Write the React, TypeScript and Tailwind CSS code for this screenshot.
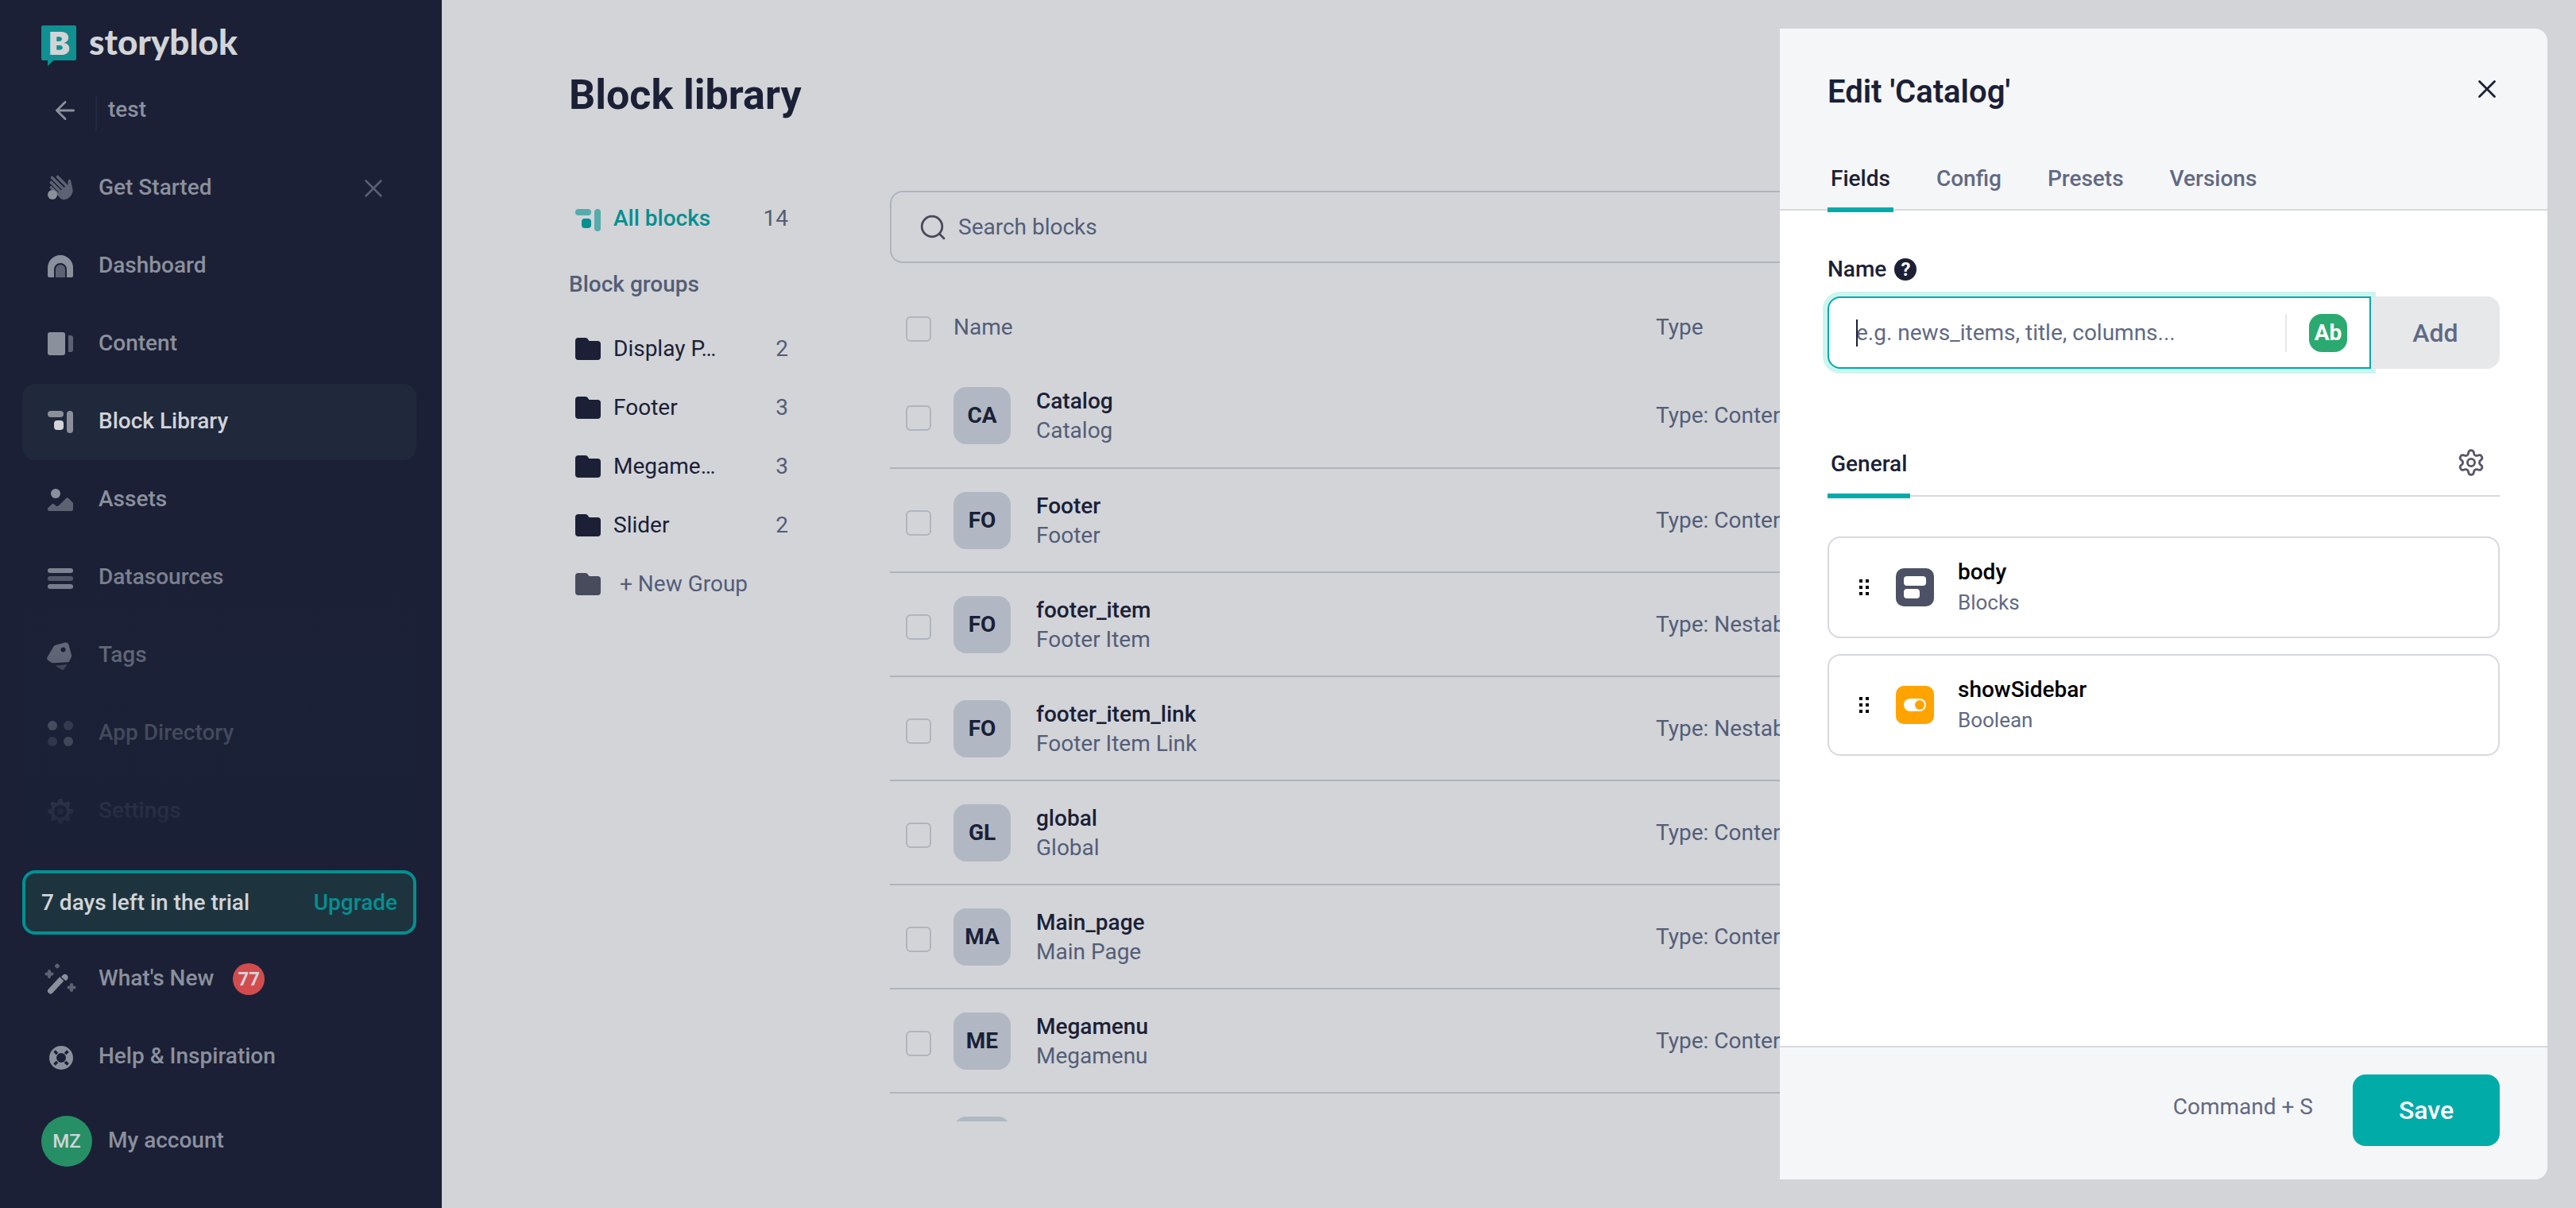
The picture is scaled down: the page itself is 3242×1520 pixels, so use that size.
import type { ReactNode } from "react";

function gearPath(teeth: number, radius: number, depth: number, cx: number, cy: number) {
  const points: string[] = [];
  const steps = teeth * 24;
  for (let i = 0; i < steps; i++) {
    const angle = (i / steps) * Math.PI * 2;
    const wave = Math.tanh(1.6 * Math.cos(teeth * angle)) / Math.tanh(1.6);
    const r = radius + depth * wave;
    points.push(`${(cx + r * Math.sin(angle)).toFixed(2)} ${(cy - r * Math.cos(angle)).toFixed(2)}`);
  }
  return `M${points.join("L")}Z`;
}

function Icon({ children }: { children: ReactNode }) {
  return (
    <svg viewBox="0 0 40 40" className="size-10 shrink-0" fill="currentColor" aria-hidden="true">
      {children}
    </svg>
  );
}

const faint = 0.6;

const HandIcon = () => (
  <Icon>
    <g opacity={faint}>
      <path
        d="M9.500 6.500L24 21M16.500 5.500L29 18M8.300 12.500L21 25M8.300 19L18 28"
        stroke="currentColor"
        strokeLinecap="round"
        strokeWidth="3.600"
        fill="none"
      />
      <path d="M17 26L27.500 16.500L29.500 17.800C30 14.500 28.800 10 30.800 9C32.800 8.300 33.200 10.500 33.500 12.500L35.600 22C36.200 26 33 30.500 29 33C25.500 35 21.500 34.500 18.500 31Z" />
    </g>
    <circle cx="10" cy="28" r="6" />
  </Icon>
);

const DashboardIcon = () => (
  <Icon>
    <path d="M4 32V22a16 16 0 0 1 32 0v10a2 2 0 0 1-2 2h-6V24a8 8 0 0 0-16 0v10H6a2 2 0 0 1-2-2Z" />
    <path opacity={faint} d="M14 34V24a6 6 0 0 1 12 0v10Z" />
  </Icon>
);

const ContentIcon = () => (
  <Icon>
    <rect x="4" y="5" width="22" height="29" rx="3" />
    <path opacity={faint} d="M30 9h3a3 3 0 0 1 3 3v15a3 3 0 0 1-3 3h-3Z" />
  </Icon>
);

const BlocksIcon = () => (
  <Icon>
    <rect opacity={faint} x="4" y="6" width="20" height="8" rx="4" />
    <rect opacity={faint} x="28" y="6" width="8" height="28" rx="4" />
    <rect x="12" y="18" width="12" height="12" rx="4" />
  </Icon>
);

const AssetsIcon = () => (
  <Icon>
    <circle cx="14" cy="12" r="6" />
    <path
      opacity={faint}
      d="M4 30.500L9 25.500a2.500 2.500 0 0 1 3.200 0l1.800 1.500a3 3 0 0 0 4 0l9-8.800a2.500 2.500 0 0 1 3.600 0L36 24v8a2 2 0 0 1-2 2H6a2 2 0 0 1-2-2Z"
    />
  </Icon>
);

const DatasourcesIcon = () => (
  <Icon>
    <rect x="4" y="8" width="32" height="6" rx="3" />
    <rect opacity={faint} x="4" y="18" width="32" height="6" rx="3" />
    <rect x="4" y="28" width="32" height="6" rx="3" />
  </Icon>
);

const TagsIcon = () => (
  <Icon>
    <path
      fillRule="evenodd"
      d="M14.500 6.500L26 3.600a4 4 0 0 1 4.500 2.800L34 19a5 5 0 0 1-.5 3.500L31 27.200a2 2 0 0 1-1.600 1L11 29.200a5 5 0 0 1-3.500-1.200L4.600 26a3.500 3.500 0 0 1-.8-4.500L11.500 8.600a5 5 0 0 1 3-2.100ZM23.500 9.600a3 3 0 1 0 0 6a3 3 0 0 0 0-6Z"
    />
    <path opacity={faint} d="M13.500 32.400L28.500 31.300L24.500 37a2.500 2.500 0 0 1-3.300.6Z" />
  </Icon>
);

const AppsIcon = () => (
  <Icon>
    <circle cx="10" cy="10" r="6" />
    <circle opacity={faint} cx="30" cy="10" r="6" />
    <circle opacity={faint} cx="10" cy="30" r="6" />
    <circle cx="30" cy="30" r="6" />
  </Icon>
);

const SettingsIcon = () => (
  <Icon>
    <path
      fillRule="evenodd"
      d={`${gearPath(8, 14, 2, 20, 20)}M20 12a8 8 0 1 0 0 16a8 8 0 0 0 0-16Z`}
    />
    <circle opacity={faint} cx="20" cy="20" r="4" />
  </Icon>
);

const WandIcon = () => (
  <Icon>
    <g stroke="currentColor" strokeLinecap="round" fill="none">
      <path d="M7.500 35L21 20.500" strokeWidth="7" />
      <g opacity={faint} strokeWidth="4">
        <path d="M6 10v7M2.500 13.500h7M34 27v7M30.500 30.500h7" />
        <path d="M16 2.500v2M15 3.500h2" />
      </g>
    </g>
    <path d="M23.500 14.500a4 4 0 0 1 5.500 5.500l-2.300 2.200-5.400-5.400Z" />
    <path d="M19 16L27 24" stroke="#1b2036" strokeWidth="1.500" />
  </Icon>
);

const HelpIcon = () => (
  <Icon>
    <circle cx="21" cy="21" r="10.500" fill="none" stroke="currentColor" strokeWidth="9" />
    <path
      d="M12.500 12.500l3.500 3.500M29.500 12.500l-3.500 3.500M12.500 29.500l3.500-3.500M29.500 29.500l-3.500-3.500"
      stroke="#1b2036"
      strokeWidth="3.600"
    />
  </Icon>
);

const FolderIcon = ({ className }: { className: string }) => (
  <svg viewBox="0 0 32 28" className={`h-7 w-8 shrink-0 ${className}`} fill="currentColor" aria-hidden="true">
    <path d="M4 0h8.500a4 4 0 0 1 3 1.300L17.500 4H28a4 4 0 0 1 4 4v16a4 4 0 0 1-4 4H4a4 4 0 0 1-4-4V4a4 4 0 0 1 4-4Z" />
  </svg>
);

const CloseIcon = ({ width }: { width: number }) => (
  <svg viewBox="0 0 24 24" className="size-6" fill="none" stroke="currentColor" strokeWidth={width} strokeLinecap="round" aria-hidden="true">
    <path d="M2.500 2.500L21.500 21.500M21.500 2.500L2.500 21.500" />
  </svg>
);

const navItems = [
  { label: "Get Started", icon: <HandIcon />, closable: true },
  { label: "Dashboard", icon: <DashboardIcon /> },
  { label: "Content", icon: <ContentIcon /> },
  { label: "Block Library", icon: <BlocksIcon />, active: true },
  { label: "Assets", icon: <AssetsIcon /> },
  { label: "Datasources", icon: <DatasourcesIcon /> },
  { label: "Tags", icon: <TagsIcon /> },
  { label: "App Directory", icon: <AppsIcon /> },
  { label: "Settings", icon: <SettingsIcon /> },
];

function Sidebar() {
  return (
    <aside className="flex h-full w-[556px] shrink-0 flex-col bg-[#1b2036] pt-8 pr-8 pb-[52px] pl-7 font-medium text-[#8b909d]">
      <a href="#" className="flex items-start gap-4 self-start pl-6" aria-label="storyblok">
        <svg viewBox="0 0 44 51" className="h-[51px] w-11 overflow-visible" aria-hidden="true">
          <path fill="#109091" d="M2 0h40a2 2 0 0 1 2 2v40a2 2 0 0 1-2 2H15.500L8 51V44H2a2 2 0 0 1-2-2V2a2 2 0 0 1 2-2Z" />
          <text x="22.500" y="36.500" textAnchor="middle" fontFamily="Inter" fontWeight="900" fontSize="40" fill="#d2d4d8">B</text>
        </svg>
        <span className="font-['Lato',sans-serif] text-[44px] leading-10 font-black text-[#d2d4d8]">storyblok</span>
      </a>
      <a href="#" className="mt-[37px] flex h-11 shrink-0 items-center pl-[42px]">
        <svg viewBox="0 0 24 24" className="mb-1.5 size-6" fill="none" stroke="currentColor" strokeWidth="2.800" strokeLinecap="round" strokeLinejoin="round" aria-hidden="true">
          <path d="M12 1.400L1.400 12L12 22.600M1.400 12H22.600" />
        </svg>
        <span className="ml-[26px] h-11 w-0.5 bg-[#202a3f]" />
        <span className="ml-3.5 pb-2">test</span>
      </a>
      <nav className="relative mt-[25px] min-h-0 overflow-hidden">
        <ul className="flex flex-col gap-0.5">
          {navItems.map((item) => (
            <li
              key={item.label}
              className={`flex h-24 shrink-0 items-center rounded-2xl pr-[42px] pl-7 ${item.active ? "bg-[#20283c] text-[#d2d4d8]" : ""}`}
            >
              <a href="#" className="flex flex-1 items-center gap-7">
                {item.icon}
                <span className="pb-0.5">{item.label}</span>
              </a>
              {item.closable && (
                <button type="button" aria-label="Dismiss" className="text-[#596075]">
                  <CloseIcon width={2.5} />
                </button>
              )}
            </li>
          ))}
        </ul>
        <div className="pointer-events-none absolute inset-x-0 bottom-0 h-[400px] bg-linear-to-b from-[#1a2136]/0 to-[#1a2136]" />
      </nav>
      <div className="mt-auto flex shrink-0 flex-col pt-4">
        <div className="flex h-[81px] items-center justify-between rounded-2xl border-4 border-[#048f90] bg-[#1d343f] px-5 text-[#d2d4d8]">
          <span>7 days left in the trial</span>
          <a href="#" className="text-[#048f90]">Upgrade</a>
        </div>
        <a href="#" className="mt-2 flex h-24 items-center gap-7 pl-7">
          <WandIcon />
          <span className="pb-0.5">What's New</span>
          <span className="-ml-1 flex size-10 items-center justify-center rounded-full bg-[#d24c4d] text-2xl font-bold text-[#d2d4d8]">
            77
          </span>
        </a>
        <a href="#" className="mt-0.5 flex h-24 items-center gap-7 pl-7">
          <HelpIcon />
          <span className="pb-0.5">Help &amp; Inspiration</span>
        </a>
        <a href="#" className="mt-[26px] flex items-center gap-5 pl-6">
          <span className="flex size-16 items-center justify-center rounded-full bg-[#268f66] text-2xl text-[#d2d4d8]">MZ</span>
          <span className="pb-0.5">My account</span>
        </a>
      </div>
    </aside>
  );
}

const groups = [
  { name: "Display P…", count: 2 },
  { name: "Footer", count: 3 },
  { name: "Megame…", count: 3 },
  { name: "Slider", count: 2 },
];

const blocks = [
  { initials: "CA", name: "Catalog", title: "Catalog", type: "Content Type" },
  { initials: "FO", name: "Footer", title: "Footer", type: "Content Type" },
  { initials: "FO", name: "footer_item", title: "Footer Item", type: "Nestable" },
  { initials: "FO", name: "footer_item_link", title: "Footer Item Link", type: "Nestable" },
  { initials: "GL", name: "global", title: "Global", type: "Content Type" },
  { initials: "MA", name: "Main_page", title: "Main Page", type: "Content Type" },
  { initials: "ME", name: "Megamenu", title: "Megamenu", type: "Content Type" },
  { initials: "ME", name: "megamenu_item", title: "Megamenu Item", type: "Nestable" },
];

const Checkbox = ({ label }: { label: string }) => (
  <input
    type="checkbox"
    aria-label={label}
    className="mt-1.5 block size-8 appearance-none rounded-md border-2 border-[#b0b4bd] bg-transparent"
  />
);

function Library() {
  return (
    <main className="flex h-full min-w-0 flex-1 flex-col px-40 pt-[88px] pb-[109px] text-[#545d77]">
      <h1 className="text-[52px] leading-[64px] font-bold text-[#1b2036]">Block library</h1>
      <div className="mt-[88px] flex min-h-0 flex-1 gap-32">
        <nav className="w-[276px] shrink-0">
          <a href="#" className="flex h-[74px] items-center text-[#048f90]">
            <span className="ml-1"><BlocksIcon /></span>
            <span className="ml-3 flex-1 pb-1 font-medium">All blocks</span>
            <span className="pb-1 text-[#545d77]">14</span>
          </a>
          <h2 className="flex h-[88px] items-center font-medium">Block groups</h2>
          {groups.map((group) => (
            <a href="#" key={group.name} className="flex h-[74px] items-center pl-2">
              <FolderIcon className="text-[#1b2036]" />
              <span className="ml-4 text-[#1b2036]">{group.name}</span>
              <span className="ml-auto">{group.count}</span>
            </a>
          ))}
          <button type="button" className="flex h-[74px] items-center gap-6 pl-2">
            <FolderIcon className="text-[#474b5b]" />
            <span>+ New Group</span>
          </button>
        </nav>
        <section className="flex min-w-0 flex-1 flex-col">
          <label className="flex h-[91px] shrink-0 items-center gap-4 rounded-2xl border-2 border-[#aeb4be] pr-8 pl-9">
            <svg viewBox="0 0 32 32" className="size-8 shrink-0" fill="none" stroke="#474b5b" strokeWidth="2.800" strokeLinecap="round" aria-hidden="true">
              <circle cx="15" cy="15" r="12.800" />
              <path d="M24.500 24.500L30 30" />
            </svg>
            <input
              type="text"
              aria-label="Search blocks"
              placeholder="Search blocks"
              className="w-full bg-transparent outline-none placeholder:text-[#545d77]"
            />
          </label>
          <div className="min-h-0 flex-1 overflow-hidden pt-8">
            <table className="w-full table-fixed border-collapse text-left">
              <colgroup>
                <col className="w-20" />
                <col className="w-[884px]" />
                <col />
              </colgroup>
              <thead>
                <tr className="h-[95px]">
                  <th className="pl-5"><Checkbox label="Select all blocks" /></th>
                  <th className="pt-0.5 font-normal">Name</th>
                  <th className="pt-0.5 font-normal">Type</th>
                </tr>
              </thead>
              <tbody>
                {blocks.map((block) => (
                  <tr key={block.name} className="h-[131px] border-b-2 border-[#aeb4be]">
                    <td className="pl-5"><Checkbox label={`Select ${block.name}`} /></td>
                    <td>
                      <div className="flex items-center gap-8">
                        <span className="flex size-[72px] items-center justify-center rounded-2xl bg-[#b1b8c3] font-bold text-[#1b2036]">
                          {block.initials}
                        </span>
                        <div className="leading-[37px]">
                          <div className="font-medium text-[#1b2036]">{block.name}</div>
                          <div>{block.title}</div>
                        </div>
                      </div>
                    </td>
                    <td>Type: {block.type}</td>
                  </tr>
                ))}
              </tbody>
            </table>
          </div>
        </section>
      </div>
    </main>
  );
}

const tabs = ["Fields", "Config", "Presets", "Versions"];

const fields = [
  {
    name: "body",
    type: "Blocks",
    icon: (
      <svg viewBox="0 0 48 48" className="size-12" aria-hidden="true">
        <rect width="48" height="48" rx="10" fill="#4c5165" />
        <rect x="10" y="10" width="28" height="12" rx="4" fill="#fff" />
        <rect x="10" y="26" width="20" height="12" rx="4" fill="#fff" />
      </svg>
    ),
  },
  {
    name: "showSidebar",
    type: "Boolean",
    icon: (
      <svg viewBox="0 0 48 48" className="size-12" aria-hidden="true">
        <rect width="48" height="48" rx="10" fill="#ffa300" />
        <rect x="10" y="16" width="28" height="16" rx="8" fill="#fff" />
        <circle cx="30" cy="24" r="6" fill="#ffa300" />
      </svg>
    ),
  },
];

function Drawer() {
  return (
    <div
      role="dialog"
      aria-label="Edit 'Catalog'"
      className="absolute inset-y-9 right-9 flex w-[966px] flex-col overflow-hidden rounded-r-2xl bg-white text-[#616984]"
    >
      <header className="border-b-2 border-[#d7d9e0] bg-[#f5f6f8] px-[60px] pt-14">
        <div className="flex items-start justify-between">
          <h2 className="text-[40px] leading-[48px] font-semibold text-[#1b2036]">Edit 'Catalog'</h2>
          <button type="button" aria-label="Close" className="mr-1 flex h-10 items-center text-[#1b2036]">
            <CloseIcon width={2.8} />
          </button>
        </div>
        <div role="tablist" className="mt-12 -mb-1 flex gap-[50px]">
          {tabs.map((tab) => (
            <button
              key={tab}
              type="button"
              role="tab"
              aria-selected={tab === "Fields"}
              className={`h-[79px] border-b-6 px-1 font-medium ${tab === "Fields" ? "border-[#00aba8] text-[#1b2036]" : "border-transparent"}`}
            >
              {tab}
            </button>
          ))}
        </div>
      </header>
      <div className="min-h-0 flex-1 px-[60px] pt-[54px]">
        <div className="flex h-10 items-center gap-2.5 text-[#1b2036]">
          <label htmlFor="field-name" className="font-medium">Name</label>
          <span className="flex size-7 items-center justify-center rounded-full bg-[#1b2036] text-2xl font-bold text-white">?</span>
        </div>
        <div className="mt-3.5 flex h-[91px]">
          <div className="relative flex flex-1 items-center rounded-l-2xl border-2 border-[#00aba8] bg-white pr-7 pl-[34px] ring-6 ring-[#ccf5ef]">
            <input
              id="field-name"
              type="text"
              placeholder="e.g. news_items, title, columns..."
              className="w-full bg-transparent outline-none placeholder:text-[#616984]"
            />
            <span className="absolute left-[34px] h-[34px] w-0.5 bg-[#1b2036]" />
            <span className="h-12 w-0.5 shrink-0 bg-[#e7e8eb]" />
            <button
              type="button"
              aria-label="Field type: text"
              className="ml-7 size-12 shrink-0 rounded-2xl bg-[#2aaa70] font-bold text-white"
            >
              Ab
            </button>
          </div>
          <button type="button" className="relative w-[162px] rounded-r-2xl bg-[#e7e8ea] text-[32px] font-medium">
            Add
          </button>
        </div>
        <div className="mt-[83px] flex items-start justify-between border-b-2 border-[#d7d9e0]">
          <button type="button" className="-mb-1 h-20 border-b-6 border-[#00aba8] px-1 font-medium text-[#1b2036]">
            General
          </button>
          <button type="button" aria-label="Tab settings" className="mt-4 mr-4 text-[#555767]">
            <svg viewBox="0 0 40 40" className="size-10" fill="none" stroke="currentColor" strokeWidth="2.800" aria-hidden="true">
              <path d={gearPath(6, 12.9, 2.4, 20, 19)} />
              <circle cx="20" cy="19" r="4.600" />
            </svg>
          </button>
        </div>
        <ul className="mt-[50px] flex flex-col gap-5">
          {fields.map((field) => (
            <li key={field.name} className="flex h-32 items-center rounded-2xl border-2 border-[#d7d9e0] pl-[38px]">
              <svg viewBox="0 0 12 20" className="h-5 w-3 text-black" fill="currentColor" aria-hidden="true">
                <path d="M0 0h4v4H0zM8 0h4v4H8zM0 8h4v4H0zM8 8h4v4H8zM0 16h4v4H0zM8 16h4v4H8z" />
              </svg>
              <span className="ml-[34px]">{field.icon}</span>
              <div className="ml-[30px] leading-[38px]">
                <div className="font-medium text-black">{field.name}</div>
                <div className="text-[26px]">{field.type}</div>
              </div>
            </li>
          ))}
        </ul>
      </div>
      <footer className="flex items-center justify-end border-t-2 border-[#d7d9e0] bg-[#f5f6f8] px-[60px] pt-[34px] pb-[42px]">
        <span className="pb-2">Command + S</span>
        <button type="button" className="ml-[50px] h-[90px] w-[185px] rounded-2xl bg-[#00aba8] text-[32px] font-medium text-white">
          Save
        </button>
      </footer>
    </div>
  );
}

export default function App() {
  return (
    <div className="relative flex h-screen overflow-hidden bg-[#d2d4d8] font-['Roboto',sans-serif] text-[28px] leading-9">
      <Sidebar />
      <Library />
      <Drawer />
    </div>
  );
}
